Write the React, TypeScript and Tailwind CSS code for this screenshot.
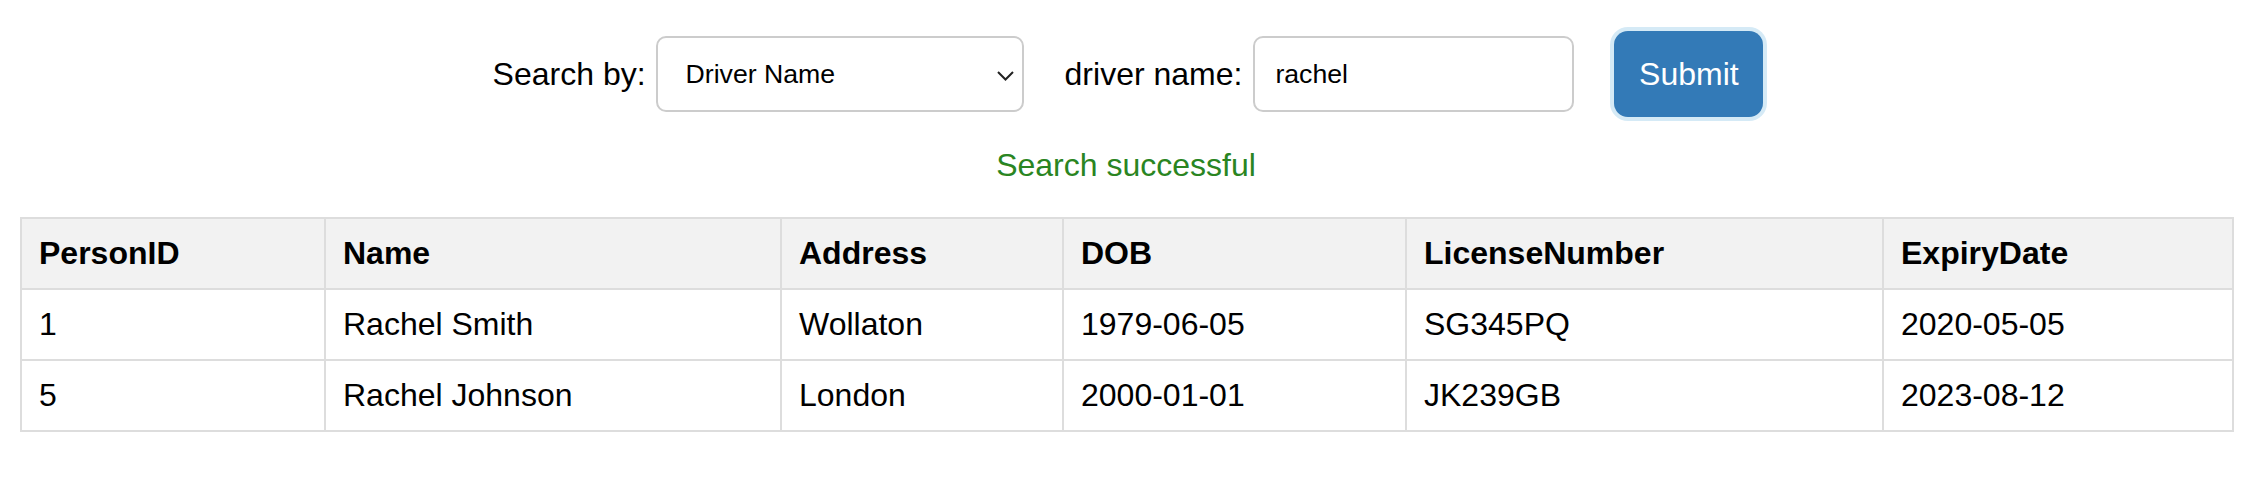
import React from "react";

const rows = [
  { id: "1", name: "Rachel Smith", address: "Wollaton", dob: "1979-06-05", license: "SG345PQ", expiry: "2020-05-05" },
  { id: "5", name: "Rachel Johnson", address: "London", dob: "2000-01-01", license: "JK239GB", expiry: "2023-08-12" },
];

const cols = [
  { label: "PersonID", w: "w-[304px]" },
  { label: "Name", w: "w-[456px]" },
  { label: "Address", w: "w-[282px]" },
  { label: "DOB", w: "w-[343px]" },
  { label: "LicenseNumber", w: "w-[477px]" },
  { label: "ExpiryDate", w: "w-[350px]" },
];

export default function App() {
  return (
    <div className="min-h-screen bg-white text-black font-['Liberation_Sans',Arial,sans-serif] text-[32px] leading-[37px] pt-[31px]">
      {/* search form */}
      <div className="flex items-center justify-center h-[86px] pl-[4px]">
        <label className="mr-[10px]">Search by:</label>
        <div className="relative w-[368px] h-[76px] border-2 border-[#cccccc] rounded-[10px] bg-white flex items-center pl-[28px] text-[26.67px]">
          <span>Driver Name</span>
          <svg className="absolute right-[8px] top-[33px]" width="17" height="10" viewBox="0 0 17 10" fill="none">
            <polyline points="1,1 8.5,8.5 16,1" stroke="#222" strokeWidth="2" />
          </svg>
        </div>
        <label className="ml-[41px] mr-[11px]">driver name:</label>
        <div className="w-[321px] h-[76px] border-2 border-[#cccccc] rounded-[10px] bg-white flex items-center pl-[20px] text-[26.67px]">
          rachel
        </div>
        <button className="ml-[40px] w-[149px] h-[86px] rounded-[14px] bg-[#337ab7] text-white shadow-[0_0_0_4px_#d5eaf6]">
          Submit
        </button>
      </div>

      <p className="mt-[30px] text-center text-[#2a8522]">Search successful</p>

      {/* results */}
      <table className="mt-[33px] ml-[20px] w-[2214px] table-fixed border-collapse border-2 border-[#dddddd]">
        <thead>
          <tr className="bg-[#f2f2f2]">
            {cols.map((c) => (
              <th key={c.label} className={`${c.w} border-2 border-[#dddddd] px-[17px] py-[16px] text-left font-bold`}>
                {c.label}
              </th>
            ))}
          </tr>
        </thead>
        <tbody>
          {rows.map((r) => (
            <tr key={r.id}>
              <td className="border-2 border-[#dddddd] px-[17px] py-[16px]">{r.id}</td>
              <td className="border-2 border-[#dddddd] px-[17px] py-[16px]">{r.name}</td>
              <td className="border-2 border-[#dddddd] px-[17px] py-[16px]">{r.address}</td>
              <td className="border-2 border-[#dddddd] px-[17px] py-[16px]">{r.dob}</td>
              <td className="border-2 border-[#dddddd] px-[17px] py-[16px]">{r.license}</td>
              <td className="border-2 border-[#dddddd] px-[17px] py-[16px]">{r.expiry}</td>
            </tr>
          ))}
        </tbody>
      </table>
    </div>
  );
}
